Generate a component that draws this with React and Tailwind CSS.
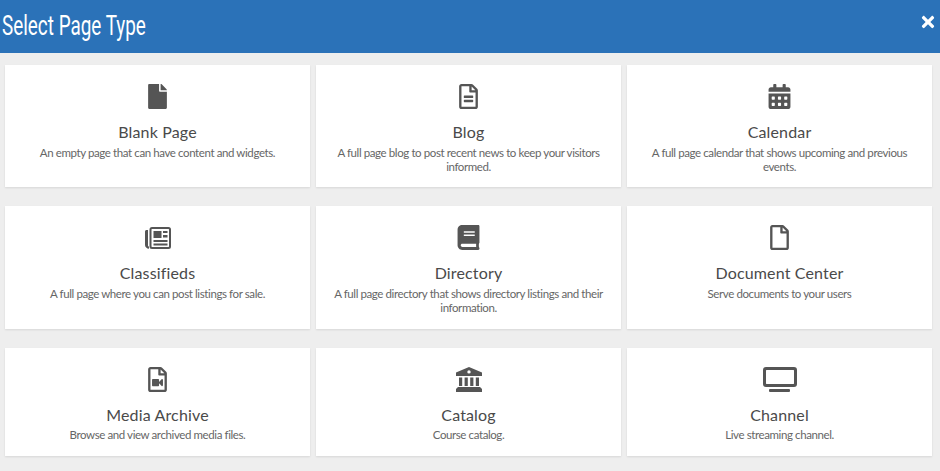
import {
  FaBook,
  FaCalendarAlt,
  FaFile,
  FaRegFile,
  FaRegFileAlt,
  FaRegFileVideo,
  FaTimes,
} from "react-icons/fa";

function NewspaperIcon({ className }) {
  return (
    <svg viewBox="0 0 26 22" className={className} fill="currentColor">
      <path d="M0 4.5C0 3.7.7 3 1.5 3H3v15.5c0 .6.4 1 1 1v2.2C1.8 21.7 0 20 0 18V4.5z" />
      <path
        fillRule="evenodd"
        d="M7 0h16.5A2.5 2.5 0 0 1 26 2.5v17a2.5 2.5 0 0 1-2.5 2.5H7a2.5 2.5 0 0 1-2.5-2.5v-17A2.5 2.5 0 0 1 7 0zm0 2a.5.5 0 0 0-.5.5v17c0 .3.2.5.5.5h16.5c.3 0 .5-.2.5-.5v-17a.5.5 0 0 0-.5-.5H7z"
      />
      <path d="M8.5 4h8v7h-8zM18 4h4.5v2H18zM18 8h4.5v2.5H18zM8.5 13h14v2h-14zM8.5 16.5h14v2h-14z" />
    </svg>
  );
}

function BankIcon({ className }) {
  return (
    <svg viewBox="0 0 28 25" className={className} fill="currentColor">
      <path
        fillRule="evenodd"
        d="M14 0l13 5.5V9H1V5.5L14 0zm0 3.2a1.7 1.7 0 1 0 0 3.4 1.7 1.7 0 0 0 0-3.4z"
      />
      <path d="M4 10.5h3.2V19H4zM9.6 10.5h3.2V19H9.6zM15.2 10.5h3.2V19h-3.2zM20.8 10.5H24V19h-3.2z" />
      <path d="M3 20h22l2 2v3H1v-3z" />
    </svg>
  );
}

function ScreenIcon({ className }) {
  return (
    <svg viewBox="0 0 34 25" className={className} fill="currentColor">
      <path
        fillRule="evenodd"
        d="M3 0h28a3 3 0 0 1 3 3v14a3 3 0 0 1-3 3H3a3 3 0 0 1-3-3V3a3 3 0 0 1 3-3zm.5 3a.5.5 0 0 0-.5.5v13c0 .3.2.5.5.5h27c.3 0 .5-.2.5-.5v-13a.5.5 0 0 0-.5-.5h-27z"
      />
      <rect x="6" y="22" width="21" height="3" rx="1" />
    </svg>
  );
}

const pageTypes = [
  { icon: FaFile, size: "text-[25px]", title: "Blank Page", text: "An empty page that can have content and widgets." },
  { icon: FaRegFileAlt, size: "text-[25px]", title: "Blog", text: "A full page blog to post recent news to keep your visitors informed." },
  { icon: FaCalendarAlt, size: "text-[25px]", title: "Calendar", text: "A full page calendar that shows upcoming and previous events." },
  { icon: NewspaperIcon, size: "h-[22px] w-[26px] mt-[2px] mb-[1px]", title: "Classifieds", text: "A full page where you can post listings for sale." },
  { icon: FaBook, size: "text-[25px]", title: "Directory", text: "A full page directory that shows directory listings and their information." },
  { icon: FaRegFile, size: "text-[25px]", title: "Document Center", text: "Serve documents to your users" },
  { icon: FaRegFileVideo, size: "text-[25px]", title: "Media Archive", text: "Browse and view archived media files." },
  { icon: BankIcon, size: "h-[25px] w-[28px]", title: "Catalog", text: "Course catalog." },
  { icon: ScreenIcon, size: "h-[25px] w-[34px]", title: "Channel", text: "Live streaming channel." },
];

function Card({ item }) {
  const Icon = item.icon;
  return (
    <div className="flex flex-col items-center bg-white px-3 pt-[19px] pb-[13.8px] text-center shadow-[0_1px_2px_rgba(0,0,0,0.1)]">
      <Icon className={`${item.size} text-[#555]`} />
      <h3 className="mt-3 text-[16px] leading-[22px] tracking-[0.15px] text-[#4a4a4a]">{item.title}</h3>
      <p className="mt-[2.5px] text-[11.5px] leading-[14px] tracking-[-0.4px] text-[#666]">{item.text}</p>
    </div>
  );
}

export default function App() {
  return (
    <div className="h-[471px] overflow-hidden bg-[#eeeeee] font-['Lato',sans-serif]">
      <header className="flex h-[53px] items-center justify-between bg-[#2b72b8] pr-[3px] pl-[2px] text-white">
        <h1 className="origin-left scale-x-[0.7] font-['Roboto',sans-serif] text-[27px] leading-none whitespace-nowrap">
          Select Page Type
        </h1>
        <FaTimes className="mb-[9px] text-[18px]" />
      </header>
      <main className="grid w-[932px] grid-cols-3 gap-x-[6px] gap-y-[19px] pt-3 pl-[5px]">
        {pageTypes.map((item) => (
          <Card key={item.title} item={item} />
        ))}
      </main>
    </div>
  );
}
